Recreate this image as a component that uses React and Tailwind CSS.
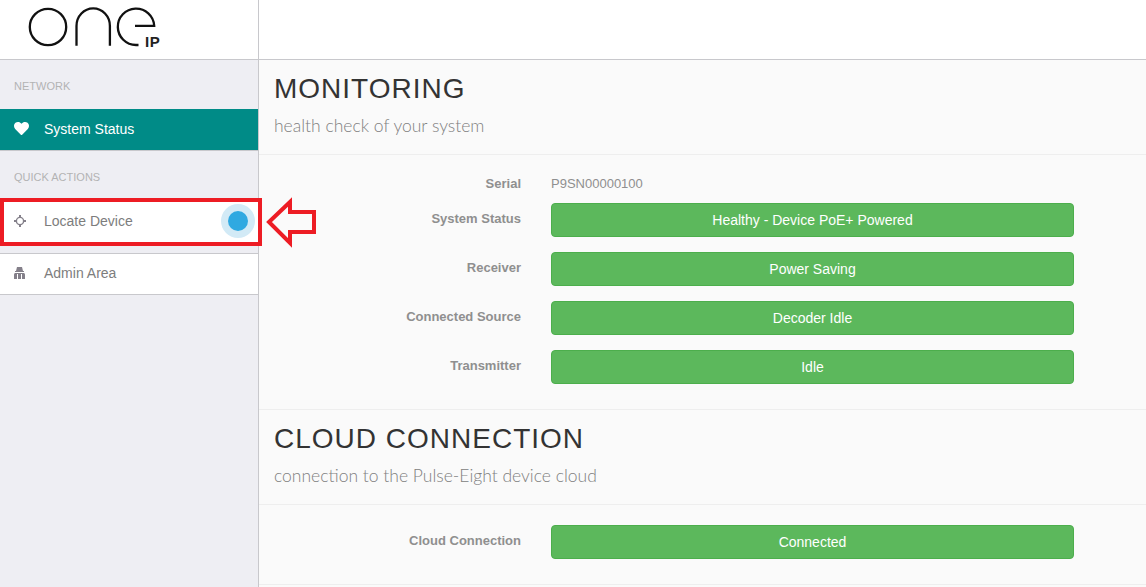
import React from 'react';
import { FaHeart } from 'react-icons/fa';

function Logo() {
  return (
    <div className="relative h-[59px] w-[258px]">
      <svg width="170" height="59" viewBox="0 0 170 59" fill="none" stroke="#111" strokeWidth="2.3" className="block">
        <circle cx="48" cy="27" r="18.2" />
        <path d="M76.5 45.7V26a16.7 17.6 0 0 1 33.4 0v19.7" />
        <path d="M138.5 45H136a18.2 18.2 0 1 1 18.2-19.2H135" />
      </svg>
      <span className="absolute left-[145px] top-[34px] text-[15px] leading-[16px] font-bold tracking-[0.5px] text-[#222]">IP</span>
    </div>
  );
}

function SectionLabel({ children }) {
  return <p className="h-[49px] pl-[14px] pt-[20px] text-[11px] leading-[13px] uppercase text-[#b3b3b3]">{children}</p>;
}

function LocateIcon() {
  return (
    <svg width="12" height="12" viewBox="0 0 12 12" fill="none" stroke="#84808a" className="shrink-0">
      <circle cx="6" cy="6" r="3.6" strokeWidth="1.4" />
      <path d="M6 0v2.6M6 9.4V12M0 6h2.6M9.4 6H12" strokeWidth="2" />
    </svg>
  );
}

function AdminIcon() {
  return (
    <svg width="11" height="12" viewBox="0 0 11 12" fill="#84808a" className="shrink-0">
      <path d="M3 0h5l1 4H2z" />
      <rect x="1" y="4" width="9" height="1" />
      <path d="M1.5 6h8c.8 0 1.5.7 1.5 1.5V12H0V7.500C0 6.700.7 6 1.500 6z" />
      <rect x="3" y="7" width="1" height="5" fill="#fff" />
      <rect x="7" y="7" width="1" height="5" fill="#fff" />
    </svg>
  );
}

function StatusRow({ label, value }) {
  return (
    <div className="flex mb-[15px] last:mb-0">
      <div className="w-[262px] pt-[6px] text-right text-[13px] leading-5 font-bold text-[#8f8f8f]">{label}</div>
      <button className="ml-[30px] h-[34px] w-[523px] rounded border border-[#4cae4c] bg-[#5cb85c] text-center text-sm text-white">{value}</button>
    </div>
  );
}

function SectionHead({ title, sub }) {
  return (
    <div className="h-[95px] border-b border-[#eeeeee] pl-[15px] pt-[11px]">
      <h2 className="text-[28px] leading-[36px] tracking-[1px] text-[#333333]">{title}</h2>
      <p className="mt-[7px] font-['Lato',sans-serif] text-[17.5px] leading-[24px] font-light text-[#808080]">{sub}</p>
    </div>
  );
}

export default function App() {
  return (
    <div className="relative h-[587px] w-[1146px] overflow-hidden bg-[#fafafa] font-['Liberation_Sans',Arial,sans-serif]">
      <header className="flex h-[60px] border-b border-[#c8c8cc] bg-white">
        <Logo />
        <div className="border-l border-[#c8c8cc]" />
      </header>
      <div className="flex h-[527px]">
        <aside className="w-[259px] shrink-0 border-r border-[#c8c8cc] bg-[#eeeef3]">
          <SectionLabel>Network</SectionLabel>
          <div className="flex h-[42px] items-center border-b border-[#c8c8cc] bg-[#008b87] pb-[2px] text-sm text-white">
            <FaHeart size={15} className="ml-[14px] mr-[15px] shrink-0" />
            System Status
          </div>
          <SectionLabel>Quick Actions</SectionLabel>
          <div className="mb-[11px] flex h-[42px] items-center bg-white text-sm text-[#7d7d7d]">
            <div className="ml-[14px] mr-[18px]"><LocateIcon /></div>
            <span className="flex-1">Locate Device</span>
            <span className="mr-[10px] h-5 w-5 rounded-full bg-[#2fa9e1] shadow-[0_0_0_7px_#d2eaf6]" />
          </div>
          <div className="flex h-[42px] items-center border-y border-[#c8c8cc] bg-white pb-[2px] text-sm text-[#7d7d7d]">
            <div className="ml-[14px] mr-[19px]"><AdminIcon /></div>
            Admin Area
          </div>
        </aside>
        <main className="flex-1">
          <SectionHead title="MONITORING" sub="health check of your system" />
          <div className="border-b border-[#eeeeee] pb-[25px] pt-[20px]">
            <div className="flex h-[28px] items-start pt-[1px] text-[13px] leading-4">
              <div className="w-[262px] text-right font-bold text-[#8f8f8f]">Serial</div>
              <div className="ml-[30px] text-[#8f8f8f]">P9SN00000100</div>
            </div>
            <StatusRow label="System Status" value="Healthy - Device PoE+ Powered" />
            <StatusRow label="Receiver" value="Power Saving" />
            <StatusRow label="Connected Source" value="Decoder Idle" />
            <StatusRow label="Transmitter" value="Idle" />
          </div>
          <SectionHead title="CLOUD CONNECTION" sub="connection to the Pulse-Eight device cloud" />
          <div className="border-b border-[#eeeeee] pb-[25px] pt-[20px]">
            <StatusRow label="Cloud Connection" value="Connected" />
          </div>
        </main>
      </div>
      {/* annotation drawn over the screenshot */}
      <div className="absolute left-0 top-[198px] h-[48px] w-[262px] border-[4px] border-[#ed1c24]" />
      <svg width="54" height="52" viewBox="0 0 54 52" fill="none" stroke="#ed1c24" strokeWidth="4" className="absolute left-[264px] top-[197px]">
        <path d="M5 25 26 5v10h24v20H26v11z" />
      </svg>
    </div>
  );
}
